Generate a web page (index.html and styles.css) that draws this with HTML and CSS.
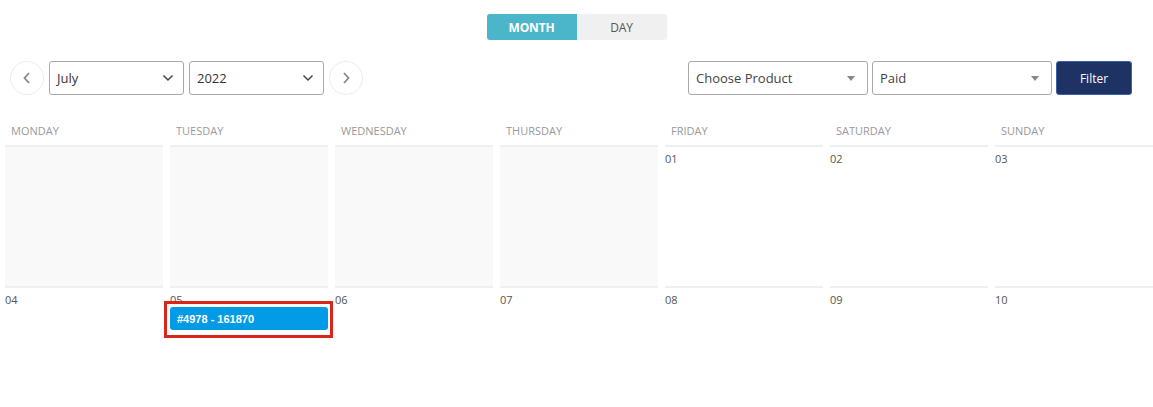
FILE: index.html
```html
<!DOCTYPE html>
<html>
<head>
<meta charset="utf-8">
<link rel="stylesheet" href="styles.css">
</head>
<body>
<div class="page">
  <div class="toggle-wrap">
    <div class="toggle">
      <span class="tab active">MONTH</span>
      <span class="tab">DAY</span>
    </div>
  </div>
  <div class="toolbar">
    <div class="left">
      <button class="circle"><svg width="10" height="14" viewBox="0 0 10 14"><path d="M7 2 L2.5 7 L7 12" fill="none" stroke="#888" stroke-width="1.8"/></svg></button>
      <div class="select sel-month"><span>July</span><svg width="12" height="8" viewBox="0 0 12 8"><path d="M1.5 1.5 L6 6 L10.5 1.5" fill="none" stroke="#444" stroke-width="1.5"/></svg></div>
      <div class="select sel-year"><span>2022</span><svg width="12" height="8" viewBox="0 0 12 8"><path d="M1.5 1.5 L6 6 L10.5 1.5" fill="none" stroke="#444" stroke-width="1.5"/></svg></div>
      <button class="circle"><svg width="10" height="14" viewBox="0 0 10 14"><path d="M3 2 L7.5 7 L3 12" fill="none" stroke="#888" stroke-width="1.8"/></svg></button>
    </div>
    <div class="right">
      <div class="select sel-wide"><span>Choose Product</span><i class="caret"></i></div>
      <div class="select sel-wide"><span>Paid</span><i class="caret"></i></div>
      <button class="filter">Filter</button>
    </div>
  </div>
  <div class="calendar">
    <div class="dow">MONDAY</div>
    <div class="dow">TUESDAY</div>
    <div class="dow">WEDNESDAY</div>
    <div class="dow">THURSDAY</div>
    <div class="dow">FRIDAY</div>
    <div class="dow">SATURDAY</div>
    <div class="dow">SUNDAY</div>

    <div class="cell empty"></div>
    <div class="cell empty"></div>
    <div class="cell empty"></div>
    <div class="cell empty"></div>
    <div class="cell"><span class="num">01</span></div>
    <div class="cell"><span class="num">02</span></div>
    <div class="cell"><span class="num">03</span></div>

    <div class="cell short"><span class="num">04</span></div>
    <div class="cell short"><span class="num">05</span><div class="event">#4978 - 161870</div></div>
    <div class="cell short"><span class="num">06</span></div>
    <div class="cell short"><span class="num">07</span></div>
    <div class="cell short"><span class="num">08</span></div>
    <div class="cell short"><span class="num">09</span></div>
    <div class="cell short"><span class="num">10</span></div>
  </div>
</div>
</body>
</html>
```

FILE: styles.css
```css
* { box-sizing: border-box; }
html, body { margin: 0; padding: 0; background: #fff; }
body {
  font-family: "Open Sans", "Noto Sans", sans-serif;
  color: #444;
  width: 1153px;
  height: 407px;
  overflow: hidden;
}
.page { padding-top: 14px; }
.toggle-wrap { display: flex; justify-content: center; }
.toggle {
  display: flex;
  border-radius: 3px;
  overflow: hidden;
  background: #f0f0f0;
}
.tab {
  width: 90px;
  height: 26px;
  display: flex;
  align-items: center;
  justify-content: center;
  font-size: 12px;
  color: #555;
  letter-spacing: -0.2px;
}
.tab.active {
  background: #4bb6c9;
  color: #fff;
  font-weight: 700;
}
.toolbar {
  display: flex;
  justify-content: space-between;
  margin-top: 21px;
  padding: 0 21px 0 10px;
  height: 34px;
}
.left, .right { display: flex; align-items: center; }
.circle {
  width: 34px;
  height: 34px;
  border-radius: 50%;
  border: 1px solid #ececec;
  background: #fff;
  display: flex;
  align-items: center;
  justify-content: center;
  padding: 0;
}
.select {
  height: 34px;
  border: 1px solid #a9a9a9;
  border-radius: 3px;
  display: flex;
  align-items: center;
  justify-content: space-between;
  padding: 0 9px 0 7px;
  font-size: 13px;
  color: #333;
  background: #fff;
}
.sel-month { width: 135px; margin: 0 5px 0 5px; }
.sel-year { width: 135px; margin-right: 5px; }
.sel-wide { width: 180px; margin-right: 4px; color: #444; padding-right: 12px; }
.caret {
  width: 0; height: 0;
  border-left: 4px solid transparent;
  border-right: 4px solid transparent;
  border-top: 5px solid #888;
}
.filter {
  width: 76px;
  height: 34px;
  background: #1e3264;
  border: 1px solid #3a62a8;
  border-radius: 3px;
  color: #fff;
  font-family: "Open Sans", sans-serif;
  font-size: 12px;
  padding: 0;
}
.calendar {
  display: grid;
  grid-template-columns: repeat(7, 158px);
  column-gap: 7px;
  padding-left: 5px;
  margin-top: 23px;
}
.dow {
  font-size: 11px;
  color: #999;
  padding: 5px 0 0 6px;
  height: 27px;
}
.cell {
  border-top: 2px solid #efefef;
  height: 141px;
  padding: 4px 0 0 0;
  font-size: 11px;
  color: #555;
}
.cell.empty { background: #f9f9f9; }
.cell.short { height: 120px; }
.num { display: block; line-height: 15px; }
.event {
  position: relative;
  height: 23px;
  background: #039be5;
  border-radius: 3px;
  color: #fff;
  font-family: "Liberation Sans", Arial, sans-serif;
  font-weight: 700;
  font-size: 11px;
  display: flex;
  align-items: center;
  padding-left: 7px;
}
.event::after {
  content: "";
  position: absolute;
  left: -6px;
  right: -5px;
  top: -6px;
  bottom: -8px;
  border: 3px solid #d9261c;
}
```
